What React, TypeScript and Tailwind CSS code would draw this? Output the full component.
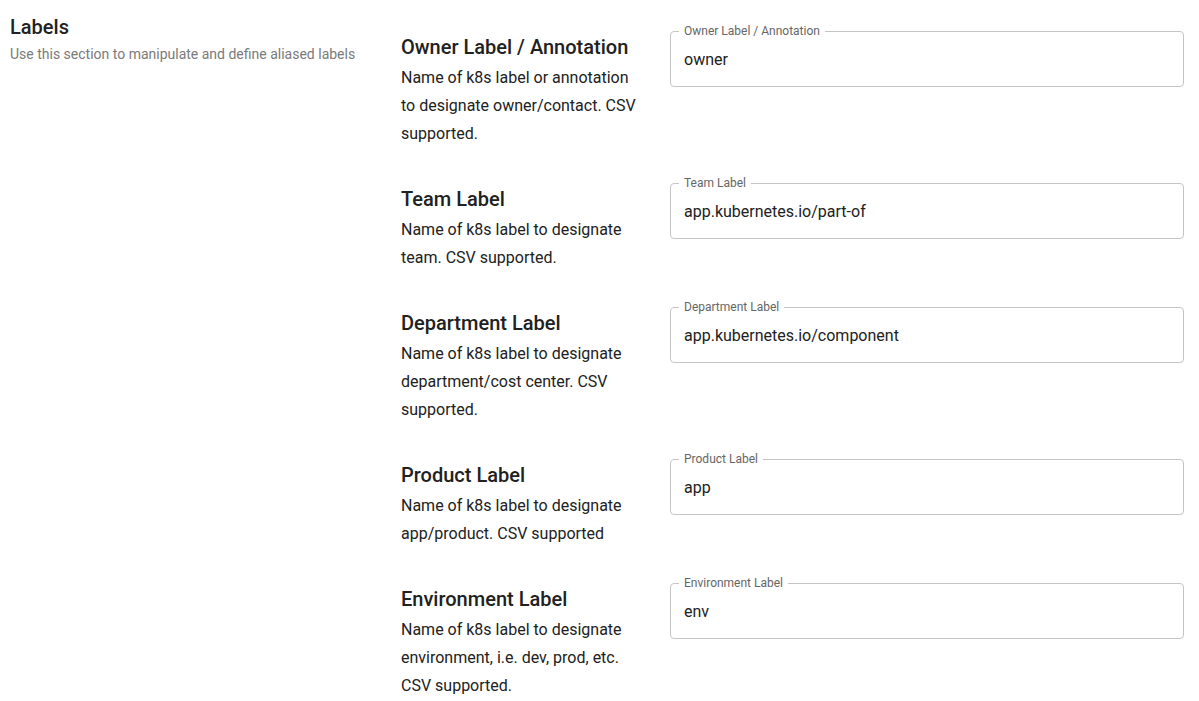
import React from "react";

const rows = [
  {
    title: "Owner Label / Annotation",
    desc: "Name of k8s label or annotation to designate owner/contact. CSV supported.",
    label: "Owner Label / Annotation",
    value: "owner",
  },
  {
    title: "Team Label",
    desc: "Name of k8s label to designate team. CSV supported.",
    label: "Team Label",
    value: "app.kubernetes.io/part-of",
  },
  {
    title: "Department Label",
    desc: "Name of k8s label to designate department/cost center. CSV supported.",
    label: "Department Label",
    value: "app.kubernetes.io/component",
  },
  {
    title: "Product Label",
    desc: "Name of k8s label to designate app/product. CSV supported",
    label: "Product Label",
    value: "app",
  },
  {
    title: "Environment Label",
    desc: "Name of k8s label to designate environment, i.e. dev, prod, etc. CSV supported.",
    label: "Environment Label",
    value: "env",
  },
];

export default function App() {
  return (
    <div
      className="flex w-[1199px] min-h-[701px] bg-white text-[#212121]"
      style={{ fontFamily: "Roboto, 'Liberation Sans', sans-serif" }}
    >
      <div className="w-[401px] shrink-0 pl-[10px] pt-[13px]">
        <div className="text-[20px] font-medium leading-[28px]">Labels</div>
        <div className="mt-[2px] text-[14px] leading-[22px] text-[#7a7a7a]">
          Use this section to manipulate and define aliased labels
        </div>
      </div>
      <div className="flex flex-1 flex-col gap-[35px] pt-[31px] pr-[15px]">
        {rows.map((r) => (
          <div key={r.title} className="flex items-start gap-[24px]">
            <div className="w-[245px] shrink-0">
              <div className="text-[20px] font-medium leading-[33px]">{r.title}</div>
              <div className="text-[16px] leading-[28px]">{r.desc}</div>
            </div>
            <div className="relative flex h-[56px] flex-1 items-center rounded-[4px] border border-[#c4c4c4] px-[13px] pt-[1px]">
              <span className="absolute left-[8px] top-[-9px] bg-white px-[5px] text-[12px] leading-[16px] text-[#666666]">
                {r.label}
              </span>
              <span className="text-[16px] text-[#212121]">{r.value}</span>
            </div>
          </div>
        ))}
      </div>
    </div>
  );
}
